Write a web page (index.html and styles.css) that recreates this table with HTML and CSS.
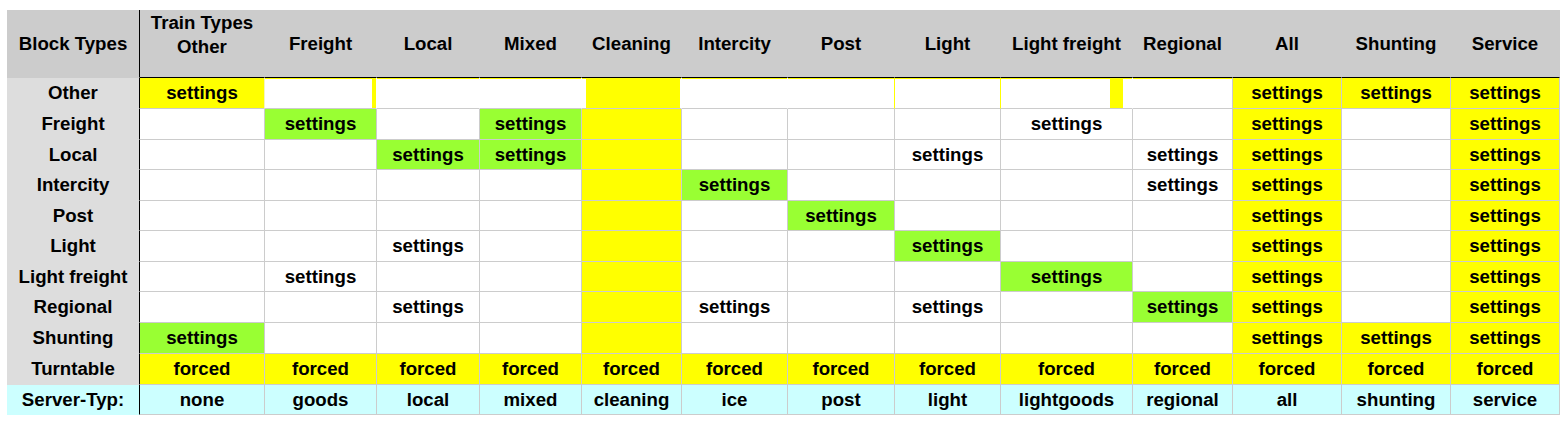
FILE: index.html
```html
<!DOCTYPE html>
<html>
<head>
<meta charset="utf-8">
<link rel="stylesheet" href="styles.css">
</head>
<body>
<div class="sheet">
  <div class="c corner">Block Types</div>
  <div class="c hd two"><span>Train Types<br>Other</span></div>
  <div class="c hd">Freight</div>
  <div class="c hd">Local</div>
  <div class="c hd">Mixed</div>
  <div class="c hd">Cleaning</div>
  <div class="c hd">Intercity</div>
  <div class="c hd">Post</div>
  <div class="c hd">Light</div>
  <div class="c hd">Light freight</div>
  <div class="c hd">Regional</div>
  <div class="c hd">All</div>
  <div class="c hd">Shunting</div>
  <div class="c hd">Service</div>

  <div class="c rh">Other</div>
  <div class="c o y o-first">settings</div>
  <div class="c o o-fr"></div>
  <div class="c o"></div>
  <div class="c o"></div>
  <div class="c o o-cl"></div>
  <div class="c o"></div>
  <div class="c o o-yr"></div>
  <div class="c o o-yr"></div>
  <div class="c o o-lf"></div>
  <div class="c o o-gr"></div>
  <div class="c o y o-gr">settings</div>
  <div class="c o y o-gr">settings</div>
  <div class="c o y o-gr">settings</div>

  <div class="c rh">Freight</div>
  <div class="c"></div>
  <div class="c g">settings</div>
  <div class="c"></div>
  <div class="c g">settings</div>
  <div class="c y"></div>
  <div class="c"></div>
  <div class="c"></div>
  <div class="c"></div>
  <div class="c">settings</div>
  <div class="c"></div>
  <div class="c y">settings</div>
  <div class="c"></div>
  <div class="c y">settings</div>

  <div class="c rh">Local</div>
  <div class="c"></div>
  <div class="c"></div>
  <div class="c g">settings</div>
  <div class="c g">settings</div>
  <div class="c y"></div>
  <div class="c"></div>
  <div class="c"></div>
  <div class="c">settings</div>
  <div class="c"></div>
  <div class="c">settings</div>
  <div class="c y">settings</div>
  <div class="c"></div>
  <div class="c y">settings</div>

  <div class="c rh">Intercity</div>
  <div class="c"></div>
  <div class="c"></div>
  <div class="c"></div>
  <div class="c"></div>
  <div class="c y"></div>
  <div class="c g">settings</div>
  <div class="c"></div>
  <div class="c"></div>
  <div class="c"></div>
  <div class="c">settings</div>
  <div class="c y">settings</div>
  <div class="c"></div>
  <div class="c y">settings</div>

  <div class="c rh">Post</div>
  <div class="c"></div>
  <div class="c"></div>
  <div class="c"></div>
  <div class="c"></div>
  <div class="c y"></div>
  <div class="c"></div>
  <div class="c g">settings</div>
  <div class="c"></div>
  <div class="c"></div>
  <div class="c"></div>
  <div class="c y">settings</div>
  <div class="c"></div>
  <div class="c y">settings</div>

  <div class="c rh">Light</div>
  <div class="c"></div>
  <div class="c"></div>
  <div class="c">settings</div>
  <div class="c"></div>
  <div class="c y"></div>
  <div class="c"></div>
  <div class="c"></div>
  <div class="c g">settings</div>
  <div class="c"></div>
  <div class="c"></div>
  <div class="c y">settings</div>
  <div class="c"></div>
  <div class="c y">settings</div>

  <div class="c rh">Light freight</div>
  <div class="c"></div>
  <div class="c">settings</div>
  <div class="c"></div>
  <div class="c"></div>
  <div class="c y"></div>
  <div class="c"></div>
  <div class="c"></div>
  <div class="c"></div>
  <div class="c g">settings</div>
  <div class="c"></div>
  <div class="c y">settings</div>
  <div class="c"></div>
  <div class="c y">settings</div>

  <div class="c rh">Regional</div>
  <div class="c"></div>
  <div class="c"></div>
  <div class="c">settings</div>
  <div class="c"></div>
  <div class="c y"></div>
  <div class="c">settings</div>
  <div class="c"></div>
  <div class="c">settings</div>
  <div class="c"></div>
  <div class="c g">settings</div>
  <div class="c y">settings</div>
  <div class="c"></div>
  <div class="c y">settings</div>

  <div class="c rh">Shunting</div>
  <div class="c g">settings</div>
  <div class="c"></div>
  <div class="c"></div>
  <div class="c"></div>
  <div class="c y"></div>
  <div class="c"></div>
  <div class="c"></div>
  <div class="c"></div>
  <div class="c"></div>
  <div class="c"></div>
  <div class="c y">settings</div>
  <div class="c y">settings</div>
  <div class="c y">settings</div>

  <div class="c rh">Turntable</div>
  <div class="c y">forced</div>
  <div class="c y">forced</div>
  <div class="c y">forced</div>
  <div class="c y">forced</div>
  <div class="c y">forced</div>
  <div class="c y">forced</div>
  <div class="c y">forced</div>
  <div class="c y">forced</div>
  <div class="c y">forced</div>
  <div class="c y">forced</div>
  <div class="c y">forced</div>
  <div class="c y">forced</div>
  <div class="c y">forced</div>

  <div class="c rh sv">Server-Typ:</div>
  <div class="c sv">none</div>
  <div class="c sv">goods</div>
  <div class="c sv">local</div>
  <div class="c sv">mixed</div>
  <div class="c sv">cleaning</div>
  <div class="c sv">ice</div>
  <div class="c sv">post</div>
  <div class="c sv">light</div>
  <div class="c sv">lightgoods</div>
  <div class="c sv">regional</div>
  <div class="c sv">all</div>
  <div class="c sv">shunting</div>
  <div class="c sv">service</div>
</div>
</body>
</html>
```
FILE: styles.css
```css
html, body {
  margin: 0;
  background: #fff;
}
body {
  padding: 10px 0 0 7px;
  font-family: "Liberation Sans", Arial, sans-serif;
  font-weight: bold;
  font-size: 18.67px;
  color: #000;
}
.sheet {
  display: grid;
  width: 1553px;
  grid-template-columns: 133px 125px 112px 103px 102px 100px 106px 107px 106px 132px 100px 109px 109px 109px;
  grid-template-rows: 68px 31px 31px 30px 31px 30px 31px 30px 31px 31px 31px 30px;
}
.c {
  box-sizing: border-box;
  display: flex;
  align-items: center;
  justify-content: center;
  text-align: center;
  white-space: nowrap;
  background: #fff;
  border-right: 1px solid #ccc;
  border-bottom: 1px solid #ccc;
}
.hd {
  background: #ccc;
  border-right-color: #ccc;
  border-bottom-color: #000;
}
.corner {
  background: #ccc;
  border-right-color: #000;
  border-bottom-color: #ccc;
}
.two {
  align-items: flex-end;
  padding-bottom: 19px;
  line-height: 23.4px;
}
.rh {
  background: #ddd;
  border-right-color: #000;
  border-bottom-color: #ddd;
}
.y { background: #ff0; }
.g { background: #9f3; }
.sv { background: #cff; }
.rh.sv {
  background: #cff;
  border-bottom-color: #cff;
}

/* "Other" row: spreadsheet overflow artefacts */
.o {
  border-right-color: #fff;
  box-shadow: inset 0 1px 0 #ff0;
}
.o-first { border-right-color: #f4f4c0; }
.o-fr {
  background: linear-gradient(to left, #ff0 4px, #fff 4px);
}
.o-cl {
  background: linear-gradient(to right, #fff 4px, #ff0 4px, #ff0 98px, #fff 98px);
}
.o-yr { border-right-color: #ff0; }
.o-lf {
  background: linear-gradient(to right, #fff 109px, #ff0 109px, #ff0 122px, #fff 122px);
}
.o-gr { border-right-color: #ccc; }
```
